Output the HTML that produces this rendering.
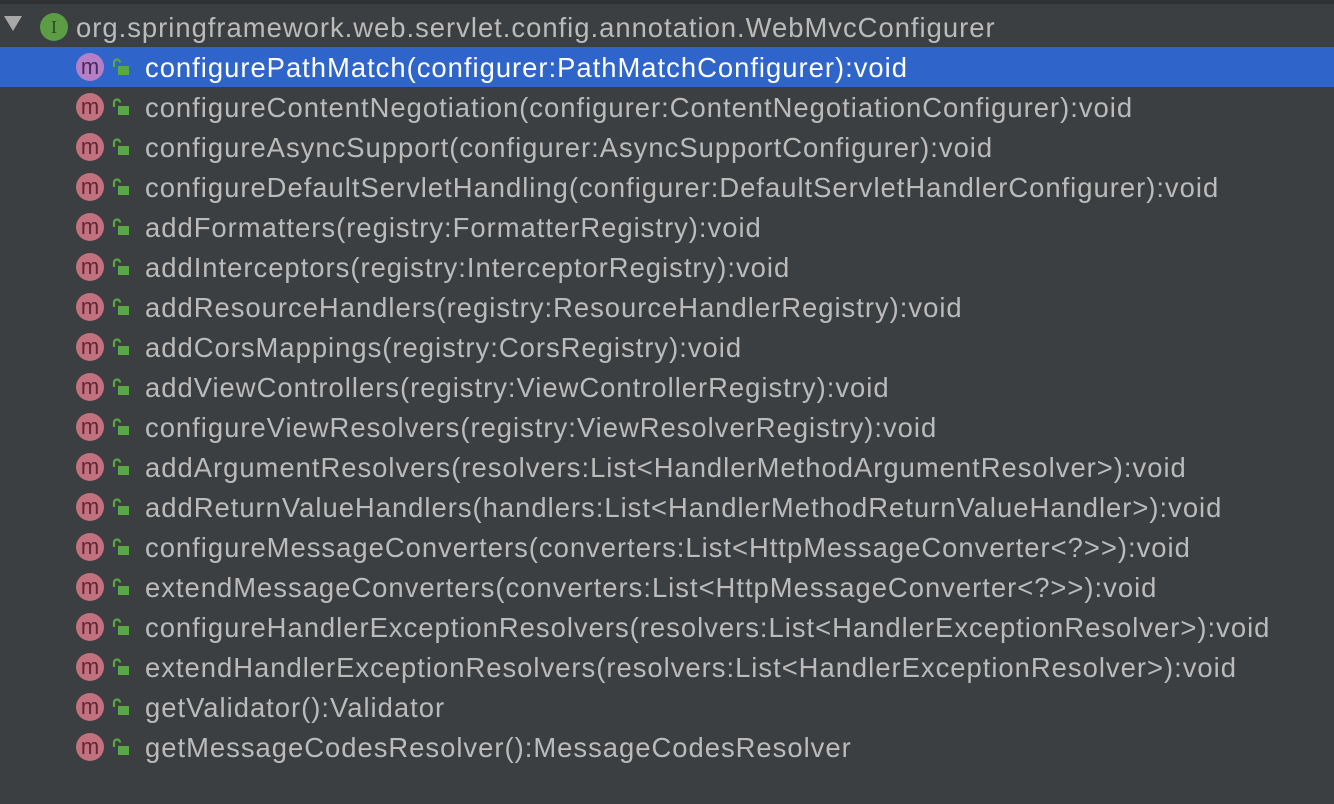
<!DOCTYPE html>
<html><head><style>
body{margin:0;width:1334px;height:804px;background:#3c3f41;overflow:hidden;font-family:"Liberation Sans",sans-serif;position:relative}
.top{position:absolute;left:0;top:0;width:1334px;height:4px;background:#2f3133}
.row{position:absolute;left:0;width:1334px;height:40px}
.sel{background:#2f65ca}
.t{position:absolute;left:145px;top:6px;font-size:27.4px;color:#bbbbbb;letter-spacing:1px;white-space:nowrap;line-height:30px}
.sel .t{color:#fff}
.c{position:absolute;left:76px;top:6px;width:28px;height:28px;border-radius:50%;background:#c3707f;color:#5b2a35;font-size:22px;text-align:center;line-height:28px}
.sel .c{background:#b57fc7;color:#4a2a55}
.lk{position:absolute;left:112px;top:11px;width:18px;height:18px}
</style></head><body>
<div class="top"></div>
<div class="row" style="top:7px">
<svg style="position:absolute;left:4px;top:9px" width="18" height="16"><polygon points="0,0 18,0 9,15" fill="#a8a8a8"/></svg>
<div style="position:absolute;left:40px;top:6px;width:28px;height:28px;border-radius:50%;background:#5b9c45;color:#2a4a20;font-family:'Liberation Serif',serif;font-size:18px;text-align:center;line-height:28px">I</div>
<div class="t" style="left:76px;color:#bbbbbb">org.springframework.web.servlet.config.annotation.WebMvcConfigurer</div>
</div>
<div class="row sel" style="top:47px"><div class="c">m</div><svg class="lk" viewBox="0 0 18 18"><path d="M2 9V4.5a3 3 0 0 1 6 0" stroke="#59a845" stroke-width="2.2" fill="none"/><rect x="6" y="8" width="11" height="9" fill="#59a845"/></svg><div class="t">configurePathMatch(configurer:PathMatchConfigurer):void</div></div>
<div class="row" style="top:87px"><div class="c">m</div><svg class="lk" viewBox="0 0 18 18"><path d="M2 9V4.5a3 3 0 0 1 6 0" stroke="#59a845" stroke-width="2.2" fill="none"/><rect x="6" y="8" width="11" height="9" fill="#59a845"/></svg><div class="t">configureContentNegotiation(configurer:ContentNegotiationConfigurer):void</div></div>
<div class="row" style="top:127px"><div class="c">m</div><svg class="lk" viewBox="0 0 18 18"><path d="M2 9V4.5a3 3 0 0 1 6 0" stroke="#59a845" stroke-width="2.2" fill="none"/><rect x="6" y="8" width="11" height="9" fill="#59a845"/></svg><div class="t">configureAsyncSupport(configurer:AsyncSupportConfigurer):void</div></div>
<div class="row" style="top:167px"><div class="c">m</div><svg class="lk" viewBox="0 0 18 18"><path d="M2 9V4.5a3 3 0 0 1 6 0" stroke="#59a845" stroke-width="2.2" fill="none"/><rect x="6" y="8" width="11" height="9" fill="#59a845"/></svg><div class="t">configureDefaultServletHandling(configurer:DefaultServletHandlerConfigurer):void</div></div>
<div class="row" style="top:207px"><div class="c">m</div><svg class="lk" viewBox="0 0 18 18"><path d="M2 9V4.5a3 3 0 0 1 6 0" stroke="#59a845" stroke-width="2.2" fill="none"/><rect x="6" y="8" width="11" height="9" fill="#59a845"/></svg><div class="t">addFormatters(registry:FormatterRegistry):void</div></div>
<div class="row" style="top:247px"><div class="c">m</div><svg class="lk" viewBox="0 0 18 18"><path d="M2 9V4.5a3 3 0 0 1 6 0" stroke="#59a845" stroke-width="2.2" fill="none"/><rect x="6" y="8" width="11" height="9" fill="#59a845"/></svg><div class="t">addInterceptors(registry:InterceptorRegistry):void</div></div>
<div class="row" style="top:287px"><div class="c">m</div><svg class="lk" viewBox="0 0 18 18"><path d="M2 9V4.5a3 3 0 0 1 6 0" stroke="#59a845" stroke-width="2.2" fill="none"/><rect x="6" y="8" width="11" height="9" fill="#59a845"/></svg><div class="t">addResourceHandlers(registry:ResourceHandlerRegistry):void</div></div>
<div class="row" style="top:327px"><div class="c">m</div><svg class="lk" viewBox="0 0 18 18"><path d="M2 9V4.5a3 3 0 0 1 6 0" stroke="#59a845" stroke-width="2.2" fill="none"/><rect x="6" y="8" width="11" height="9" fill="#59a845"/></svg><div class="t">addCorsMappings(registry:CorsRegistry):void</div></div>
<div class="row" style="top:367px"><div class="c">m</div><svg class="lk" viewBox="0 0 18 18"><path d="M2 9V4.5a3 3 0 0 1 6 0" stroke="#59a845" stroke-width="2.2" fill="none"/><rect x="6" y="8" width="11" height="9" fill="#59a845"/></svg><div class="t">addViewControllers(registry:ViewControllerRegistry):void</div></div>
<div class="row" style="top:407px"><div class="c">m</div><svg class="lk" viewBox="0 0 18 18"><path d="M2 9V4.5a3 3 0 0 1 6 0" stroke="#59a845" stroke-width="2.2" fill="none"/><rect x="6" y="8" width="11" height="9" fill="#59a845"/></svg><div class="t">configureViewResolvers(registry:ViewResolverRegistry):void</div></div>
<div class="row" style="top:447px"><div class="c">m</div><svg class="lk" viewBox="0 0 18 18"><path d="M2 9V4.5a3 3 0 0 1 6 0" stroke="#59a845" stroke-width="2.2" fill="none"/><rect x="6" y="8" width="11" height="9" fill="#59a845"/></svg><div class="t">addArgumentResolvers(resolvers:List&lt;HandlerMethodArgumentResolver&gt;):void</div></div>
<div class="row" style="top:487px"><div class="c">m</div><svg class="lk" viewBox="0 0 18 18"><path d="M2 9V4.5a3 3 0 0 1 6 0" stroke="#59a845" stroke-width="2.2" fill="none"/><rect x="6" y="8" width="11" height="9" fill="#59a845"/></svg><div class="t">addReturnValueHandlers(handlers:List&lt;HandlerMethodReturnValueHandler&gt;):void</div></div>
<div class="row" style="top:527px"><div class="c">m</div><svg class="lk" viewBox="0 0 18 18"><path d="M2 9V4.5a3 3 0 0 1 6 0" stroke="#59a845" stroke-width="2.2" fill="none"/><rect x="6" y="8" width="11" height="9" fill="#59a845"/></svg><div class="t">configureMessageConverters(converters:List&lt;HttpMessageConverter&lt;?&gt;&gt;):void</div></div>
<div class="row" style="top:567px"><div class="c">m</div><svg class="lk" viewBox="0 0 18 18"><path d="M2 9V4.5a3 3 0 0 1 6 0" stroke="#59a845" stroke-width="2.2" fill="none"/><rect x="6" y="8" width="11" height="9" fill="#59a845"/></svg><div class="t">extendMessageConverters(converters:List&lt;HttpMessageConverter&lt;?&gt;&gt;):void</div></div>
<div class="row" style="top:607px"><div class="c">m</div><svg class="lk" viewBox="0 0 18 18"><path d="M2 9V4.5a3 3 0 0 1 6 0" stroke="#59a845" stroke-width="2.2" fill="none"/><rect x="6" y="8" width="11" height="9" fill="#59a845"/></svg><div class="t">configureHandlerExceptionResolvers(resolvers:List&lt;HandlerExceptionResolver&gt;):void</div></div>
<div class="row" style="top:647px"><div class="c">m</div><svg class="lk" viewBox="0 0 18 18"><path d="M2 9V4.5a3 3 0 0 1 6 0" stroke="#59a845" stroke-width="2.2" fill="none"/><rect x="6" y="8" width="11" height="9" fill="#59a845"/></svg><div class="t">extendHandlerExceptionResolvers(resolvers:List&lt;HandlerExceptionResolver&gt;):void</div></div>
<div class="row" style="top:687px"><div class="c">m</div><svg class="lk" viewBox="0 0 18 18"><path d="M2 9V4.5a3 3 0 0 1 6 0" stroke="#59a845" stroke-width="2.2" fill="none"/><rect x="6" y="8" width="11" height="9" fill="#59a845"/></svg><div class="t">getValidator():Validator</div></div>
<div class="row" style="top:727px"><div class="c">m</div><svg class="lk" viewBox="0 0 18 18"><path d="M2 9V4.5a3 3 0 0 1 6 0" stroke="#59a845" stroke-width="2.2" fill="none"/><rect x="6" y="8" width="11" height="9" fill="#59a845"/></svg><div class="t">getMessageCodesResolver():MessageCodesResolver</div></div>
</body></html>
